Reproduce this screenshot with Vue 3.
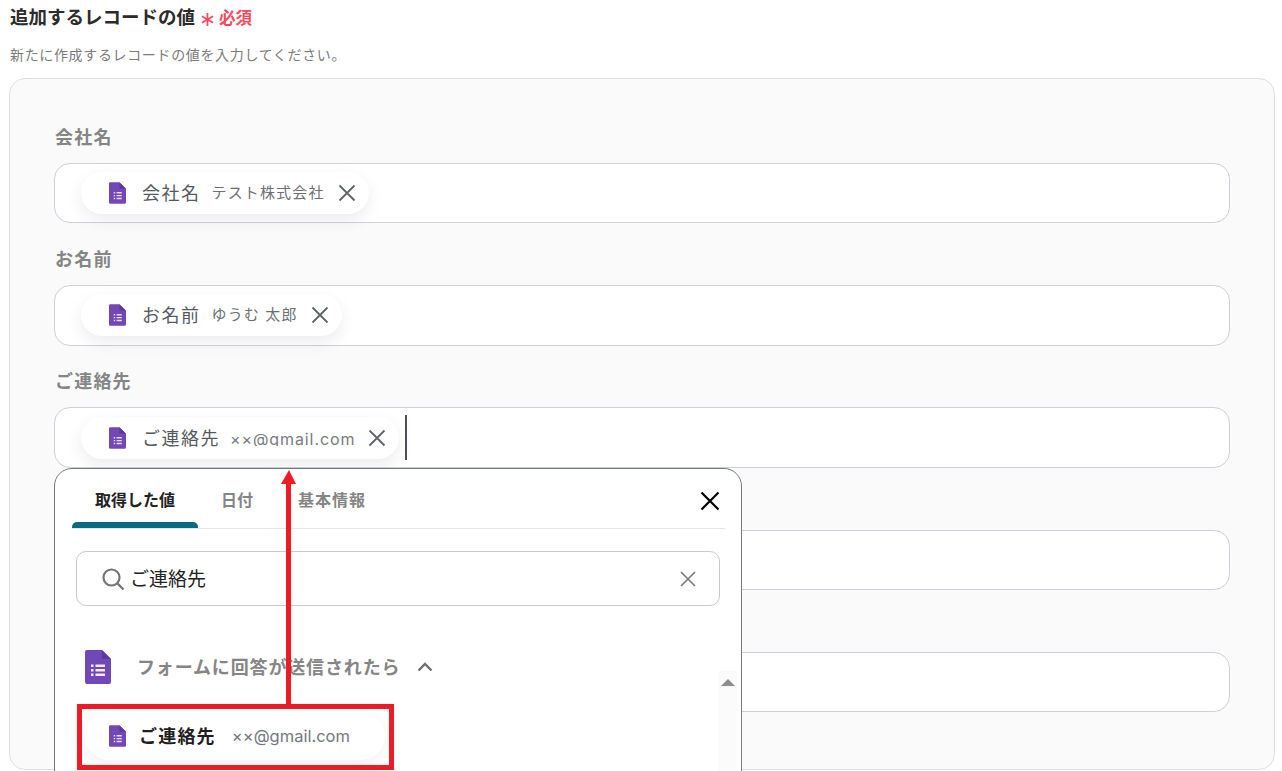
<script setup>
const fields = [
  { label: '会社名', chip: '会社名', value: 'テスト株式会社' },
  { label: 'お名前', chip: 'お名前', value: 'ゆうむ 太郎' },
  { label: 'ご連絡先', chip: 'ご連絡先', value: '××@gmail.com', caret: true },
  { label: '', },
  { label: '', },
]
const tabs = ['取得した値', '日付', '基本情報']
</script>

<template>
  <div class="page">
    <div class="title-row">
      <span class="title">追加するレコードの値</span>
      <span class="req"><svg class="star" viewBox="0 0 14 14" width="13" height="13"><path d="M7 0v14M1 3.500l12 7M13 3.500l-12 7" stroke="#f8485e" stroke-width="1.900" fill="none"/></svg>必須</span>
    </div>
    <p class="sub">新たに作成するレコードの値を入力してください。</p>

    <section class="panel">
      <div v-for="(f, i) in fields" :key="i" class="field">
        <div class="label">{{ f.label }}</div>
        <div class="input">
          <div v-if="f.chip" class="chip">
            <svg class="form-icon" viewBox="0 0 18 23" width="17" height="22"><path d="M1.500 0H11l7 7v14.500a1.500 1.500 0 0 1-1.500 1.500h-15A1.500 1.500 0 0 1 0 21.500v-20A1.500 1.500 0 0 1 1.500 0Z" fill="#7248b9"/><path d="M11 0l7 7h-7z" fill="#5b3a9b"/><path d="M5 10.500h1.500V12H5zM8 10.500h5.500V12H8zM5 13.500h1.500V15H5zM8 13.500h5.500V15H8zM5 16.500h1.500V18H5zM8 16.500h5.500V18H8z" fill="#e6dcf5"/></svg>
            <span class="chip-name">{{ f.chip }}</span>
            <span class="chip-value" :class="{ latin: f.caret }">{{ f.value }}</span>
            <svg class="chip-x" viewBox="0 0 18 18" width="18" height="18"><path d="M1.500 1.500l15 15M16.500 1.500l-15 15" stroke="#5f6368" stroke-width="1.800" fill="none"/></svg>
          </div>
          <span v-if="f.caret" class="caret"></span>
        </div>
      </div>
    </section>

    <div class="popup">
      <div class="tabs">
        <div v-for="(t, i) in tabs" :key="t" class="tab" :class="{ active: i === 0 }">{{ t }}</div>
        <svg class="popup-x" viewBox="0 0 20 20" width="20" height="20"><path d="M1.500 1.500l17 17M18.500 1.500l-17 17" stroke="#000" stroke-width="2.200" fill="none"/></svg>
      </div>
      <div class="search">
        <svg viewBox="0 0 24 24" width="24" height="24"><circle cx="10.500" cy="10.500" r="8" stroke="#757575" stroke-width="2.200" fill="none"/><path d="M16.500 16.500l6 6" stroke="#757575" stroke-width="2.400"/></svg>
        <span class="search-text">ご連絡先</span>
        <svg class="search-x" viewBox="0 0 16 16" width="16" height="16"><path d="M1 1l14 14M15 1 1 15" stroke="#777" stroke-width="1.600" fill="none"/></svg>
      </div>
      <div class="list">
        <div class="group">
          <svg viewBox="0 0 26 34" width="26" height="34"><path d="M2 0h15l9 9v23a2 2 0 0 1-2 2H2a2 2 0 0 1-2-2V2a2 2 0 0 1 2-2Z" fill="#7248b9"/><path d="M17 0l9 9h-9z" fill="#5b3a9b"/><path d="M6 14.500h2.500V17H6zM10.500 14.500H20V17h-9.500zM6 19h2.500v2.500H6zM10.500 19H20v2.500h-9.500zM6 23.500h2.500V26H6zM10.500 23.500H20V26h-9.500z" fill="#f1ebfa"/></svg>
          <span class="group-name">フォームに回答が送信されたら</span>
          <svg viewBox="0 0 16 10" width="16" height="10"><path d="M1.500 8.500 8 2l6.500 6.500" stroke="#6f6f6f" stroke-width="2.400" fill="none"/></svg>
        </div>
        <div class="result">
          <svg viewBox="0 0 18 23" width="17" height="22"><path d="M1.500 0H11l7 7v14.500a1.500 1.500 0 0 1-1.500 1.500h-15A1.500 1.500 0 0 1 0 21.500v-20A1.500 1.500 0 0 1 1.500 0Z" fill="#7248b9"/><path d="M11 0l7 7h-7z" fill="#5b3a9b"/><path d="M5 10.500h1.500V12H5zM8 10.500h5.500V12H8zM5 13.500h1.500V15H5zM8 13.500h5.500V15H8zM5 16.500h1.500V18H5zM8 16.500h5.500V18H8z" fill="#e6dcf5"/></svg>
          <span class="result-name">ご連絡先</span>
          <span class="result-value">××@gmail.com</span>
        </div>
        <div class="scrollbar"><span class="scroll-up"></span></div>
      </div>
    </div>

    <div class="highlight"></div>
    <div class="arrow-line"></div>
    <div class="arrow-head"></div>
  </div>
</template>

<style scoped>
.page {
  position: relative;
  width: 1282px;
  height: 771px;
  overflow: hidden;
  background: #fff;
  box-sizing: border-box;
  padding: 3px 7px 0 9px;
  font-family: "Noto Sans CJK JP", "Noto Sans", sans-serif;
}
.title-row { display: flex; align-items: center; height: 26px; }
.title { font-size: 18.500px; font-weight: 700; color: #2b2b2b; padding-left: 1px; }
.req { display: flex; align-items: center; margin-left: 6px; font-size: 16.500px; font-weight: 700; color: #f8485e; margin-top: 2px; }
.star { margin-right: 5px; margin-top: 4px; }
.sub { margin: 15px 0 0; font-size: 14px; line-height: 20px; color: #7b7b7b; padding-left: 1px; letter-spacing: 0.650px; }
.panel {
  box-sizing: border-box;
  height: 692px;
  margin-top: 14px;
  padding: 43px 44px 0 44px;
  background: #fafafa;
  border: 1px solid #dcdee4;
  border-radius: 16px;
}
.field { height: 122.200px; }
.label { height: 41px; line-height: 28px; font-size: 18px; font-weight: 700; color: #858585; letter-spacing: 1.200px; padding-left: 1px; box-sizing: border-box; }
.input {
  box-sizing: border-box;
  height: 60.400px;
  display: flex;
  align-items: center;
  padding-left: 26px;
  background: #fff;
  border: 1px solid #ccd0d9;
  border-radius: 16px;
}
.chip {
  display: flex;
  align-items: center;
  height: 42px;
  padding: 0 13px 0 28px;
  background: #fff;
  border-radius: 21px;
  box-shadow: 0 6px 16px rgba(0, 0, 0, 0.08);
}
.form-icon { flex: none; }
.chip-name { margin-left: 16px; padding-bottom: 2px; font-size: 18px; color: #55595e; letter-spacing: 1.500px; }
.chip-value {
  margin-left: 11px;
  height: 18px;
  line-height: 18px;
  overflow: hidden;
  font-size: 15px;
  font-family: Inter, "Noto Sans CJK JP", sans-serif;
  color: #6c7075;
  letter-spacing: 1.150px;
}
.chip-value.latin { height: 16px; font-size: 16px; letter-spacing: 0.900px; color: #777b80; margin-left: 10px; }
.chip-x { margin-left: 13px; }
.caret { width: 2px; height: 45px; margin-left: 6px; background: #4b4e5c; }
.popup {
  position: absolute;
  left: 54px;
  top: 468px;
  width: 688px;
  height: 320px;
  box-sizing: border-box;
  padding: 0 0 0 17px;
  background: #fff;
  border: 1px solid #77787b;
  border-radius: 18px;
}
.tabs {
  position: relative;
  display: flex;
  height: 60px;
  box-sizing: border-box;
  width: 653px;
  border-bottom: 1px solid #e5e5e5;
}
.tab {
  position: relative;
  display: flex;
  align-items: center;
  justify-content: center;
  box-sizing: border-box;
  padding-top: 1px;
  width: 78px;
  height: 59px;
  font-size: 16px;
  font-weight: 700;
  color: #858585;
}
.tab:first-child { width: 126px; }
.tab:last-of-type { width: 112px; letter-spacing: 1px; }
.tab.active { color: #222; }
.tab.active::after {
  content: "";
  position: absolute;
  left: 0;
  right: 0;
  bottom: 0;
  height: 6px;
  background: #076a80;
  border-radius: 5px 5px 0 0;
}
.popup-x { position: absolute; right: 5px; top: 22px; }
.search {
  display: flex;
  align-items: center;
  box-sizing: border-box;
  width: 644px;
  height: 55px;
  margin: 22px 0 0 4px;
  padding: 0 23px 0 24px;
  border: 1px solid #c9c9c9;
  border-radius: 10px;
}
.search-text { flex: 1; margin-left: 5px; padding-bottom: 2px; font-size: 19px; color: #222; }
.list { position: relative; height: 170px; }
.group { display: flex; align-items: center; height: 36px; margin: 43px 0 0 13px; }
.group-name { margin: 0 17px 0 26px; padding-bottom: 2px; font-size: 18px; font-weight: 700; color: #858585; letter-spacing: 0.850px; }
.result {
  display: flex;
  align-items: center;
  width: 300px;
  height: 48px;
  box-sizing: border-box;
  margin: 27px 0 0 13px;
  padding-left: 24px;
  background: #fff;
  border-radius: 24px;
  box-shadow: 0 4px 14px rgba(0, 0, 0, 0.06);
}
.result-name { margin-left: 13px; padding-bottom: 2px; font-size: 18px; font-weight: 700; color: #1f1f1f; letter-spacing: 1.200px; }
.result-value { margin-left: 16px; font-size: 16.500px; font-family: Inter, "Noto Sans", sans-serif; color: #74787c; }
.scrollbar {
  position: absolute;
  left: 646px;
  top: 22px;
  width: 19px;
  height: 150px;
  background: #fbfbfb;
}
.scroll-up {
  position: absolute;
  left: 3px;
  top: 8px;
  border-left: 7px solid transparent;
  border-right: 7px solid transparent;
  border-bottom: 7px solid #8c8c8c;
}
.highlight {
  position: absolute;
  left: 77px;
  top: 704px;
  width: 317px;
  height: 66px;
  box-sizing: border-box;
  border: 5px solid #ee1b24;
}
.arrow-line { position: absolute; left: 286px; top: 480px; width: 5px; height: 225px; background: #ee1b24; }
.arrow-head {
  position: absolute;
  left: 281px;
  top: 470px;
  border-left: 8px solid transparent;
  border-right: 7px solid transparent;
  border-bottom: 14px solid #ee1b24;
}
</style>
